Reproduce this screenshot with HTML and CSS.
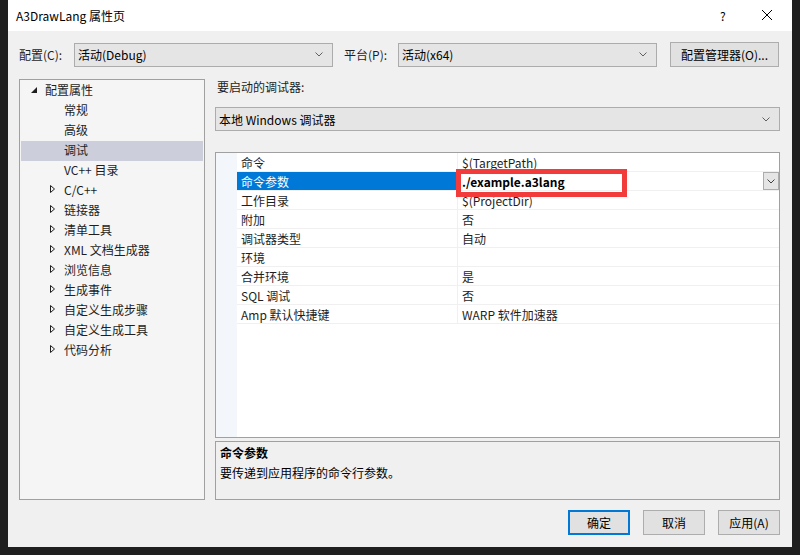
FILE: index.html
```html
<!DOCTYPE html>
<html lang="zh-CN">
<head>
    <meta charset="UTF-8">
    <title>A3DrawLang 属性页</title>
    <link rel="stylesheet" href="styles.css">
</head>
<body>
    <div class="window">
        <div class="titlebar">
            <span class="title">A3DrawLang 属性页</span>
            <span class="tb-help">?</span>
            <span class="tb-close">
                <svg viewBox="0 0 10 10" width="10" height="10" fill="none" stroke="#000" stroke-width="1">
                    <path d="M0 0 L10 10 M10 0 L0 10"></path>
                </svg>
            </span>
        </div>

        <div class="content">
            <div class="config-row">
                <span class="config-label">配置(C):</span>
                <div class="select select-config">
                    <span>活动(Debug)</span>
                    <svg class="chevron" viewBox="0 0 8 5" width="8" height="5"><polyline points="0.5,0.5 4,4 7.5,0.5"></polyline></svg>
                </div>
                <span class="platform-label">平台(P):</span>
                <div class="select select-platform">
                    <span>活动(x64)</span>
                    <svg class="chevron" viewBox="0 0 8 5" width="8" height="5"><polyline points="0.5,0.5 4,4 7.5,0.5"></polyline></svg>
                </div>
                <button class="btn btn-manager">配置管理器(O)...</button>
            </div>

            <div class="main">
                <div class="tree">
                    <div class="tree-item root">
                        <svg class="tri-open" viewBox="0 0 6 6" width="6" height="6"><polygon points="6,0 6,6 0,6"></polygon></svg>
                        <span>配置属性</span>
                    </div>
                    <div class="tree-item leaf"><span>常规</span></div>
                    <div class="tree-item leaf"><span>高级</span></div>
                    <div class="tree-item leaf selected"><span>调试</span></div>
                    <div class="tree-item leaf"><span>VC++ 目录</span></div>
                    <div class="tree-item branch">
                        <svg class="tri-closed" viewBox="0 0 5 8" width="5" height="8"><polygon points="0.5,0.5 4.5,4 0.5,7.5"></polygon></svg>
                        <span>C/C++</span>
                    </div>
                    <div class="tree-item branch">
                        <svg class="tri-closed" viewBox="0 0 5 8" width="5" height="8"><polygon points="0.5,0.5 4.5,4 0.5,7.5"></polygon></svg>
                        <span>链接器</span>
                    </div>
                    <div class="tree-item branch">
                        <svg class="tri-closed" viewBox="0 0 5 8" width="5" height="8"><polygon points="0.5,0.5 4.5,4 0.5,7.5"></polygon></svg>
                        <span>清单工具</span>
                    </div>
                    <div class="tree-item branch">
                        <svg class="tri-closed" viewBox="0 0 5 8" width="5" height="8"><polygon points="0.5,0.5 4.5,4 0.5,7.5"></polygon></svg>
                        <span>XML 文档生成器</span>
                    </div>
                    <div class="tree-item branch">
                        <svg class="tri-closed" viewBox="0 0 5 8" width="5" height="8"><polygon points="0.5,0.5 4.5,4 0.5,7.5"></polygon></svg>
                        <span>浏览信息</span>
                    </div>
                    <div class="tree-item branch">
                        <svg class="tri-closed" viewBox="0 0 5 8" width="5" height="8"><polygon points="0.5,0.5 4.5,4 0.5,7.5"></polygon></svg>
                        <span>生成事件</span>
                    </div>
                    <div class="tree-item branch">
                        <svg class="tri-closed" viewBox="0 0 5 8" width="5" height="8"><polygon points="0.5,0.5 4.5,4 0.5,7.5"></polygon></svg>
                        <span>自定义生成步骤</span>
                    </div>
                    <div class="tree-item branch">
                        <svg class="tri-closed" viewBox="0 0 5 8" width="5" height="8"><polygon points="0.5,0.5 4.5,4 0.5,7.5"></polygon></svg>
                        <span>自定义生成工具</span>
                    </div>
                    <div class="tree-item branch">
                        <svg class="tri-closed" viewBox="0 0 5 8" width="5" height="8"><polygon points="0.5,0.5 4.5,4 0.5,7.5"></polygon></svg>
                        <span>代码分析</span>
                    </div>
                </div>

                <div class="right">
                    <div class="debugger-label">要启动的调试器:</div>
                    <div class="select select-debugger">
                        <span>本地 Windows 调试器</span>
                        <svg class="chevron" viewBox="0 0 8 5" width="8" height="5"><polyline points="0.5,0.5 4,4 7.5,0.5"></polyline></svg>
                    </div>

                    <div class="grid">
                        <div class="grid-margin"></div>
                        <div class="grid-rows">
                            <div class="prop-row">
                                <div class="prop-name">命令</div>
                                <div class="prop-value">$(TargetPath)</div>
                            </div>
                            <div class="prop-row selected">
                                <div class="prop-name">命令参数</div>
                                <div class="prop-value editing">
                                    <span>./example.a3lang</span>
                                    <span class="drop-btn">
                                        <svg viewBox="0 0 8 5" width="8" height="5"><polyline points="0.5,0.5 4,4 7.5,0.5"></polyline></svg>
                                    </span>
                                </div>
                            </div>
                            <div class="prop-row">
                                <div class="prop-name">工作目录</div>
                                <div class="prop-value">$(ProjectDir)</div>
                            </div>
                            <div class="prop-row">
                                <div class="prop-name">附加</div>
                                <div class="prop-value">否</div>
                            </div>
                            <div class="prop-row">
                                <div class="prop-name">调试器类型</div>
                                <div class="prop-value">自动</div>
                            </div>
                            <div class="prop-row">
                                <div class="prop-name">环境</div>
                                <div class="prop-value"></div>
                            </div>
                            <div class="prop-row">
                                <div class="prop-name">合并环境</div>
                                <div class="prop-value">是</div>
                            </div>
                            <div class="prop-row">
                                <div class="prop-name">SQL 调试</div>
                                <div class="prop-value">否</div>
                            </div>
                            <div class="prop-row">
                                <div class="prop-name">Amp 默认快捷键</div>
                                <div class="prop-value">WARP 软件加速器</div>
                            </div>
                        </div>
                        <!-- red annotation box drawn over the edited value -->
                        <div class="highlight-box"></div>
                    </div>

                    <div class="desc">
                        <div class="desc-title">命令参数</div>
                        <div class="desc-text">要传递到应用程序的命令行参数。</div>
                    </div>
                </div>
            </div>

            <div class="buttons">
                <button class="btn btn-dialog default">确定</button>
                <button class="btn btn-dialog">取消</button>
                <button class="btn btn-dialog">应用(A)</button>
            </div>
        </div>
    </div>
</body>
</html>
```

FILE: styles.css
```css
* {
    margin: 0;
    padding: 0;
    box-sizing: border-box;
}

body {
    background: #1f1f1f;
    padding: 0 8px 8px 8px;
    font-family: "Noto Sans CJK SC", "Noto Sans", sans-serif;
    font-size: 12px;
    color: #1e1e1e;
    width: 800px;
    height: 555px;
    overflow: hidden;
}

.window {
    width: 784px;
    height: 547px;
    background: #f0f0f0;
    display: flex;
    flex-direction: column;
}

/* Title bar */
.titlebar {
    height: 31px;
    background: #fff;
    display: flex;
    align-items: center;
    padding-left: 8px;
    color: #000;
}

.title {
    flex: 1;
    font-size: 12px;
}

.tb-help {
    width: 10px;
    margin-right: 32px;
    font-size: 12px;
}

.tb-close {
    width: 10px;
    height: 10px;
    margin-right: 20px;
    margin-top: -1px;
    display: flex;
}

/* Content */
.content {
    flex: 1;
    padding: 11px 12px 0 11px;
}

.config-row {
    display: flex;
    align-items: center;
    height: 25px;
}

.config-label {
    width: 55px;
}

.platform-label {
    width: 54px;
    margin-left: 11px;
}

.select {
    height: 24px;
    background: #e5e5e5;
    border: 1px solid #acacac;
    display: flex;
    align-items: center;
    justify-content: space-between;
    padding: 0 9px 0 3px;
    color: #000;
}

.select-config,
.select-platform {
    width: 259px;
}

.chevron {
    fill: none;
    stroke: #606060;
    stroke-width: 1;
}

.btn {
    font-family: inherit;
    font-size: 12px;
    color: #000;
    background: #e1e1e1;
    border: 1px solid #adadad;
    height: 25px;
}

.btn-manager {
    width: 109px;
    margin-left: 13px;
}

/* Main area */
.main {
    display: flex;
    margin-top: 12px;
}

.tree {
    width: 186px;
    height: 421px;
    background: #f5f5f5;
    border: 1px solid #a0a0a0;
    padding: 0 1px;
}

.tree-item {
    height: 20px;
    display: flex;
    align-items: center;
    padding-bottom: 2px;
    color: #1e1e1e;
}

.tree-item.selected {
    margin-top: 1px;
    margin-bottom: -1px;
    padding-bottom: 3px;
    background: #cccedb;
}

.tree-item.root {
    padding-left: 10px;
}

.tree-item.root span {
    margin-left: 8px;
}

.tri-open {
    fill: #1e1e1e;
    margin-top: 2px;
}

.tree-item.leaf {
    padding-left: 43px;
}

.tree-item.branch {
    padding-left: 29px;
}

.tree-item.branch span {
    margin-left: 9px;
}

.tri-closed {
    fill: none;
    stroke: #1e1e1e;
    stroke-width: 1;
}

.right {
    width: 565px;
    margin-left: 10px;
    display: flex;
    flex-direction: column;
}

.debugger-label {
    height: 16px;
    line-height: 16px;
    padding-left: 2px;
}

.select-debugger {
    margin-top: 12px;
    width: 565px;
}

/* Property grid */
.grid {
    margin-top: 21px;
    height: 286px;
    border: 1px solid #a0a0a0;
    background: #fff;
    display: flex;
    position: relative;
}

.grid-margin {
    width: 21px;
    background: #f3f6fb;
}

.grid-rows {
    flex: 1;
}

.prop-row {
    height: 19px;
    display: flex;
    border-bottom: 1px solid #f0f0f0;
}

.prop-name {
    width: 221px;
    padding: 1px 0 0 4px;
    line-height: 18px;
    border-right: 1px solid #f0f0f0;
    color: #1e1e1e;
}

.prop-value {
    flex: 1;
    padding: 1px 0 0 4px;
    line-height: 18px;
    color: #1e1e1e;
    display: flex;
}

.prop-row.selected .prop-name {
    background: #0078d7;
    color: #fff;
}

.prop-value.editing {
    padding-top: 0;
    font-weight: bold;
    color: #000;
    justify-content: space-between;
}

.prop-value.editing span:first-child {
    padding-top: 1px;
}

.drop-btn {
    width: 16px;
    height: 18px;
    background: #e5e5e5;
    border: 1px solid #acacac;
    display: flex;
    align-items: center;
    justify-content: center;
}

.drop-btn svg {
    fill: none;
    stroke: #404040;
    stroke-width: 1;
}

.highlight-box {
    position: absolute;
    left: 240px;
    top: 16px;
    width: 171px;
    height: 28px;
    border: 5px solid #f23c3c;
}

/* Description */
.desc {
    margin-top: 3px;
    height: 59px;
    border: 1px solid #a0a0a0;
    background: #f0f0f0;
    padding: 1px 4px;
    line-height: 20px;
    color: #000;
}

.desc-title {
    font-weight: bold;
}

/* Dialog buttons */
.buttons {
    display: flex;
    justify-content: flex-end;
    gap: 13px;
    margin-top: 10px;
}

.btn-dialog {
    width: 62px;
}

.btn-dialog.default {
    border: 2px solid #0078d7;
}
```
